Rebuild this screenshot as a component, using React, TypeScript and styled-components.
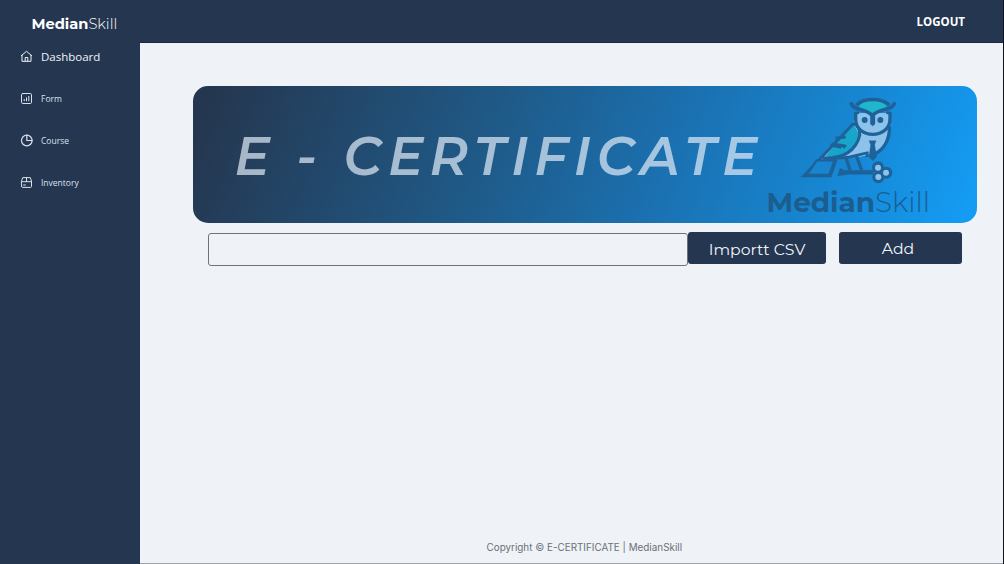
import React from "react";
import styled, { createGlobalStyle } from "styled-components";

const navy = "#253750";

const GlobalStyle = createGlobalStyle`
  * { box-sizing: border-box; }
  body { margin: 0; background: #eff3f8; }
`;

const Page = styled.div`
  display: flex;
  flex-direction: column;
  width: 1004px;
  height: 564px;
  overflow: hidden;
  background: #eff3f8;
  border-right: 1px solid #10151d;
  font-family: "Open Sans", "Noto Sans", sans-serif;
`;

const Header = styled.header`
  display: flex;
  flex: 0 0 43px;
  justify-content: space-between;
  align-items: center;
  padding: 4px 38px 0 31.5px;
  background: linear-gradient(${navy}, ${navy}) left / 140px 100% no-repeat, linear-gradient(#1d2c45, #1d2c45) bottom / 100% 1px no-repeat, ${navy};
`;

const Brand = styled.div`
  color: #fff;
  font: 400 14.65px/20px Montserrat, Inter, sans-serif;
  padding-top: 1px;
  b { font-weight: 700; }
  span { font-weight: 300; }
`;

const Logout = styled.a`
  color: #fff;
  font: 700 11.5px/16px "Open Sans", sans-serif;
  padding-bottom: 3px;
`;

const Body = styled.div`
  display: flex;
  flex: 1;
`;

const Sidebar = styled.nav`
  display: flex;
  flex-direction: column;
  flex: 0 0 140px;
  gap: 22px;
  padding: 3px 0 0 20px;
  background: ${navy};
`;

const NavItem = styled.a<{ $active?: boolean }>`
  display: flex;
  align-items: center;
  gap: 8px;
  height: 20px;
  color: ${(p) => (p.$active ? "#eef3fa" : "#d8e1ec")};
  font-size: ${(p) => (p.$active ? "11.5px" : "8.5px")};
  span { padding-top: 1px; }
  svg { width: 13px; height: 13px; flex: none; }
`;

const Main = styled.main`
  display: flex;
  flex: 1;
  flex-direction: column;
  padding: 43px 26px 0 52px;
  border-bottom: 1px solid #a3a3ab;
`;

const Banner = styled.section`
  display: flex;
  flex: none;
  width: 784px;
  height: 137px;
  margin-left: 0.5px;
  border-radius: 15px;
  background: linear-gradient(112deg, #253750 3%, #1f5a88 38%, #1b6fae 59%, #1785d0 79%, #149bf2 98%);
`;

const Title = styled.h1`
  flex: 0 0 574px;
  margin: 0;
  padding: 39px 0 0 42px;
  color: rgba(225, 235, 247, 0.7);
  font: italic 600 52.6px/62px Montserrat, Inter, sans-serif;
  letter-spacing: 6.15px;
  white-space: nowrap;
`;

const Emblem = styled.div`
  display: flex;
  flex-direction: column;
  width: 170px;
  svg { display: block; width: 120px; height: 105px; margin: -0.5px 0 0 23.2px; flex: none; }
`;

const Wordmark = styled.div`
  margin-top: -5px;
  color: #1c5d90;
  font: 400 27.9px/32px Montserrat, Inter, sans-serif;
  white-space: nowrap;
  b { font-weight: 700; }
  span { font-weight: 300; }
`;

const Toolbar = styled.div`
  display: flex;
  padding: 9px 0 0 16px;
`;

const SearchField = styled.input`
  width: 480px;
  height: 33px;
  margin-top: 1px;
  padding: 0 10px;
  border: 1px solid #6f7379;
  border-radius: 3px;
  background: transparent;
  outline: none;
`;

const Button = styled.button<{ $width: number; $gap?: number; $pad?: string }>`
  width: ${(p) => p.$width}px;
  height: 32px;
  margin-left: ${(p) => p.$gap ?? 0}px;
  padding: ${(p) => p.$pad ?? "0"};
  border: 0;
  border-radius: 3px;
  background: #243650;
  color: #f0f4fa;
  font: 400 15.7px/20px Montserrat, Inter, sans-serif;
`;

const Footer = styled.footer`
  margin: auto 0 9px 294.5px;
  color: #6c7076;
  font: 400 9.9px/14px Inter, sans-serif;
  white-space: nowrap;
`;

const stroke = { fill: "none", stroke: "currentColor", strokeWidth: 1, strokeLinejoin: "round", strokeLinecap: "round" } as const;

const HomeIcon = () => (
  <svg viewBox="0 0 13 13" {...stroke}>
    <path d="M1.4 5.6 6.5 1.3l5.1 4.3M2 5.2v6.1h9V5.2M5.2 11V7.5h2.6V11" />
  </svg>
);
const ChartIcon = () => (
  <svg viewBox="0 0 13 13" {...stroke}>
    <rect x="1.5" y="1.5" width="10" height="10" rx="1.2" />
    <path d="M4.2 8.8V7.4M6.5 8.8V5.8M8.8 8.8V4.4" />
  </svg>
);
const PieIcon = () => (
  <svg viewBox="0 0 13 13" {...stroke} strokeWidth={1.2}>
    <circle cx="6.8" cy="6.5" r="5.3" />
    <path d="M6.8 1.2v5.3h5.3" />
  </svg>
);
const BoxIcon = () => (
  <svg viewBox="0 0 13 13" {...stroke}>
    <path d="M1.5 5.2 2.7 1.6h7.6l1.2 3.6v5.2a1 1 0 0 1-1 1h-8a1 1 0 0 1-1-1zM1.5 5.7h10M6.5 1.6v4M3.5 9h2" />
  </svg>
);

const Owl = () => (
  <svg viewBox="0 0 360 315">
    <g stroke="#1e6299" strokeLinejoin="round">
      <path d="M191 112 C158 136 130 174 105 207 L43 269 L125 269 L136 220 L170 217 C185 220 210 214 238 205 C277 190 302 160 302 120 L302 82 L194 82Z" fill="#8dc3eb" stroke="none" />
      <path d="M190 112 L106 211 C162 216 199 191 208 148Z" fill="#18a5cc" strokeWidth="0" />
      <path d="M192 111 L42 269 H121 L139 218" fill="none" strokeWidth="9" strokeLinejoin="miter" />
      <path d="M80 223 L50 267 H118 L134 222Z" fill="#1785d0" strokeWidth="7" strokeLinejoin="miter" />
      <path d="M98 215 C158 220 199 195 210 145" fill="none" strokeWidth="9" />
      <path d="M192 112 C207 122 211 135 208 148" fill="none" strokeWidth="9" />
      <path d="M136 157 L167 153 M126 174 L165 180 L158 184 M121 177 L154 184" fill="none" strokeWidth="9" />
      <path d="M139 219 L205 213 L216 248 H150Z" fill="#1785d0" strokeWidth="0" />
      <path d="M166 210 L180 252 M198 207 L215 252" fill="none" strokeWidth="10" />
      <path d="M143 270 L150 247 L163 253 H250 V265 H175Z" fill="#1e6299" strokeWidth="1" />
      <path d="M298 120 C301 165 276 195 254 204" fill="none" strokeWidth="10" />
      <path d="M136 216 C168 219 198 209 232 200 L231 213" fill="none" strokeWidth="8" />
      <path d="M237 164 H258 L254 176 L260 213 L248 224 L237 213 L242 176Z" fill="#1e6299" strokeWidth="1" />
      <path d="M197 82 V99 C197 128 220 145 248 145 C276 145 300 128 300 99 V82" fill="#8dc3eb" strokeWidth="10" />
      <path d="M207 63 C221 35 274 35 290 63 L250 83Z" fill="#20b7cc" strokeWidth="0" />
      <path d="M199 57 C222 35 274 35 298 57" fill="none" strokeWidth="10" />
      <path d="M184 53 C191 75 223 65 247 88 C271 65 304 75 313 53" fill="none" strokeWidth="11" strokeLinecap="round" />
      <path d="M192 82 L207 80 M304 82 L289 80" fill="none" strokeWidth="8" />
      <path d="M241 83 H255 V114 L248 120 L241 114Z" fill="#1e6299" strokeWidth="1" />
    </g>
    <g fill="#1e6299">
      <circle cx="224" cy="102" r="9" /><circle cx="271" cy="102" r="9" />
      <circle cx="264" cy="244" r="18" /><circle cx="265" cy="274" r="18" /><circle cx="289" cy="260" r="18" />
    </g>
    <g fill="#8dc3eb">
      <circle cx="264" cy="245" r="9" /><circle cx="265" cy="273" r="9" /><circle cx="288" cy="260" r="9" />
    </g>
  </svg>
);

export default function App() {
  return (
    <>
      <GlobalStyle />
      <Page>
        <Header>
          <Brand><b>Median</b><span>Skill</span></Brand>
          <Logout>LOGOUT</Logout>
        </Header>
        <Body>
          <Sidebar>
            <NavItem $active><HomeIcon /><span>Dashboard</span></NavItem>
            <NavItem><ChartIcon /><span>Form</span></NavItem>
            <NavItem><PieIcon /><span>Course</span></NavItem>
            <NavItem><BoxIcon /><span>Inventory</span></NavItem>
          </Sidebar>
          <Main>
            <Banner>
              <Title>E - CERTIFICATE</Title>
              <Emblem>
                <Owl />
                <Wordmark><b>Median</b><span>Skill</span></Wordmark>
              </Emblem>
            </Banner>
            <Toolbar>
              <SearchField aria-label="Search" />
              <Button $width={138} $pad="3px 0 0 0">Importt CSV</Button>
              <Button $width={123} $gap={13} $pad="1px 5px 0 0">Add</Button>
            </Toolbar>
            <Footer>Copyright © E-CERTIFICATE | MedianSkill</Footer>
          </Main>
        </Body>
      </Page>
    </>
  );
}
